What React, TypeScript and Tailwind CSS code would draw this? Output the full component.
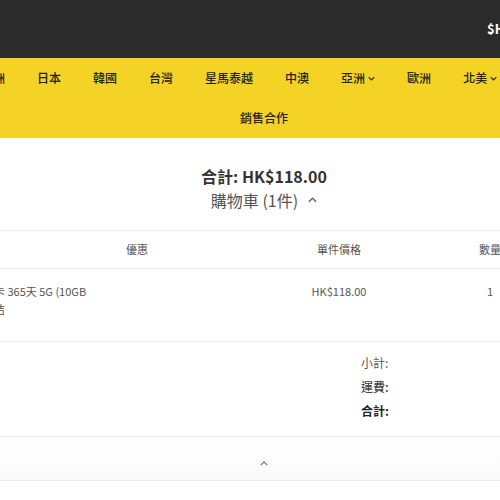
import React from "react";

const font = { fontFamily: '"Noto Sans CJK TC", "Noto Sans", sans-serif' };

const navItems = [
  { label: "澳洲" },
  { label: "日本" },
  { label: "韓國" },
  { label: "台灣" },
  { label: "星馬泰越" },
  { label: "中澳" },
  { label: "亞洲", dropdown: true },
  { label: "歐洲" },
  { label: "北美", dropdown: true },
  { label: "其他" },
];

const Chevron: React.FC<{ up?: boolean; className?: string }> = ({ up, className }) => (
  <svg viewBox="0 0 10 6" className={className} fill="none" stroke="currentColor" strokeWidth="1.6">
    {up ? <path d="M1 5 L5 1 L9 5" /> : <path d="M1 1 L5 5 L9 1" />}
  </svg>
);

export default function App() {
  return (
    <div className="w-[500px] h-[500px] overflow-hidden bg-white" style={font}>
      <div className="w-[528px]">
        {/* Top bar */}
        <header className="h-[58px] bg-[#2b2b2b] flex items-center pl-[487px]">
          <span className="text-white text-[13px] font-bold whitespace-nowrap">$HKD</span>
        </header>

        {/* Yellow navigation */}
        <nav className="bg-[#f4d226] text-[#222] text-[12px] font-medium">
          <div className="h-[40px] flex items-center gap-8 -ml-[19px] whitespace-nowrap">
            {navItems.map((item) => (
              <span key={item.label} className="flex items-center gap-[3px]">
                {item.label}
                {item.dropdown && <Chevron className="w-[7px] h-[5px]" />}
              </span>
            ))}
          </div>
          <div className="h-[40px] flex items-center justify-center">銷售合作</div>
        </nav>

        {/* Cart summary heading */}
        <div className="pt-[26px] flex flex-col items-center">
          <div className="text-[16px] leading-[24px] font-bold text-[#333]">合計: HK$118.00</div>
          <div className="text-[16px] leading-[24px] text-[#555] flex items-center gap-[10px]">
            購物車 (1件)
            <Chevron up className="w-[9px] h-[6px] text-[#666]" />
          </div>
        </div>

        {/* Cart table */}
        <div className="mt-[18px] border-t border-[#ececec]">
          <div className="grid grid-cols-[274px_130px_172px] h-[38px] items-center text-[11px] text-[#555] border-b border-[#ececec]">
            <div className="text-center">優惠</div>
            <div className="text-center">單件價格</div>
            <div className="text-center">數量</div>
          </div>
          <div className="grid grid-cols-[274px_130px_172px] h-[73px] pt-[13px] text-[11px] leading-[18px] text-[#555] border-b border-[#ececec]">
            <div className="-ml-[6px]">
              <div>卡 365天 5G (10GB</div>
              <div>洁</div>
            </div>
            <div className="text-center">HK$118.00</div>
            <div className="text-center">1</div>
          </div>

          {/* Totals */}
          <div className="h-[95px] pt-[9px] pl-[361px] text-[12px] leading-[24px] border-b border-[#ececec]">
            <div className="text-[#555]">小計:</div>
            <div className="text-[#444] font-medium">運費:</div>
            <div className="text-[#222] font-bold">合計:</div>
          </div>

          <div className="h-[44px] flex items-center justify-center pt-[10px] border-b border-[#ececec] bg-gradient-to-b from-white to-[#fafafa]">
            <Chevron up className="w-[8px] h-[5px] text-[#777]" />
          </div>
        </div>
      </div>
    </div>
  );
}
